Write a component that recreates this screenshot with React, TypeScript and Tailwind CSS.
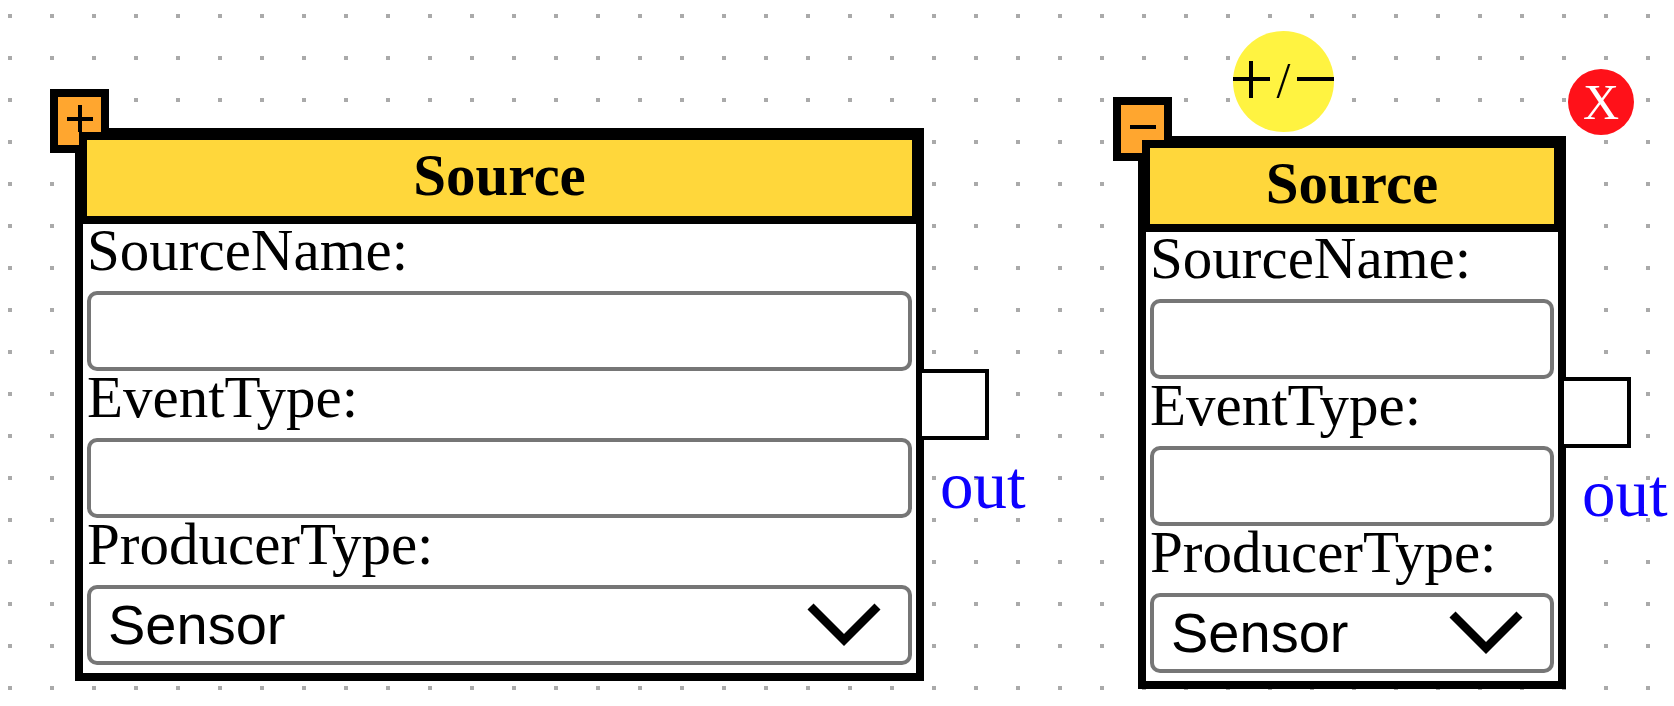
import { useId } from "react";

function PlusMinusIcon({ plus }: { plus: boolean }) {
  return (
    <svg className="h-[27px] w-[27px]" viewBox="0 0 27 27" aria-hidden="true">
      <rect x="0" y="12" width="26" height="4" />
      {plus && <rect x="11" y="0" width="4" height="27" />}
    </svg>
  );
}

function Chevron() {
  return (
    <svg
      className="pointer-events-none col-start-1 row-start-1 mt-[18px] mr-[31px] h-[43px] w-[74px] justify-self-end"
      viewBox="0 0 74 43"
      fill="none"
      stroke="black"
      strokeWidth="8.5"
      aria-hidden="true"
    >
      <path d="M3.5 3.5 37 37 70.5 3.5" />
    </svg>
  );
}

const labelClass = "text-[59px] leading-[53px]";
const controlClass =
  "h-20 w-full appearance-none rounded-[10px] border-4 border-[#767676] bg-white px-[17px] font-['Liberation_Sans',sans-serif] text-[56px] leading-[64px] text-black outline-none";

function TextField({ label }: { label: string }) {
  const id = useId();
  return (
    <div className="flex flex-col gap-[14px]">
      <label htmlFor={id} className={labelClass}>
        {label}
      </label>
      <input id={id} type="text" className={controlClass} />
    </div>
  );
}

function SelectField({ label, options }: { label: string; options: string[] }) {
  const id = useId();
  return (
    <div className="flex flex-col gap-[14px]">
      <label htmlFor={id} className={labelClass}>
        {label}
      </label>
      <div className="grid">
        <select id={id} className={`col-start-1 row-start-1 ${controlClass}`}>
          {options.map((option) => (
            <option key={option}>{option}</option>
          ))}
        </select>
        <Chevron />
      </div>
    </div>
  );
}

function NodeTools() {
  return (
    <div className="absolute -right-[68px] bottom-full left-[95px] flex items-end justify-between pb-px">
      <button
        type="button"
        aria-label="Toggle size"
        className="mb-[3px] flex h-[101px] w-[101px] items-center justify-between rounded-full bg-[#fff341] pb-1 text-[50px] leading-[56px]"
      >
        <svg className="h-[37px] w-[37px]" viewBox="0 0 37 37" aria-hidden="true">
          <rect x="0" y="16" width="37" height="4" />
          <rect x="16" y="0" width="4" height="37" />
        </svg>
        <span>/</span>
        <svg className="h-[37px] w-[37px]" viewBox="0 0 37 37" aria-hidden="true">
          <rect x="0" y="16" width="37" height="4" />
        </svg>
      </button>
      <button
        type="button"
        aria-label="Remove"
        className="h-[66px] w-[66px] rounded-full bg-[#ff1119] text-center text-[50px] leading-[66px] text-white"
      >
        X
      </button>
    </div>
  );
}

function SourceNode({ className, plus, tools }: { className: string; plus: boolean; tools?: boolean }) {
  return (
    <article className={`absolute ${className}`}>
      <div className="border-8 border-black bg-white">
        <h2 className="relative z-20 -mx-1 -mt-1 border-8 border-black bg-[#ffd73b] pt-[2px] pb-2 text-center text-[59px] leading-[66px] font-bold">
          Source
        </h2>
        <div className="flex flex-col px-1 pb-2">
          <TextField label="SourceName:" />
          <TextField label="EventType:" />
          <SelectField label="ProducerType:" options={["Sensor"]} />
        </div>
      </div>

      <button
        type="button"
        aria-label={plus ? "Expand" : "Collapse"}
        className="absolute -top-[39px] -left-[25px] z-10 flex h-16 w-[59px] items-start border-8 border-black bg-[#ffa62f] pt-2 pl-[9px]"
      >
        <PlusMinusIcon plus={plus} />
      </button>

      <div className="absolute top-[241px] left-full -ml-[6px] flex flex-col gap-2">
        <div className="h-[71px] w-[71px] border-4 border-black bg-white" />
        <span className="pl-[22px] text-[67px] leading-[74px] text-[#0d00ff]">out</span>
      </div>

      {tools && <NodeTools />}
    </article>
  );
}

export default function App() {
  return (
    <main className="relative min-h-screen overflow-hidden bg-white bg-[conic-gradient(from_270deg_at_4px_4px,#aaa_90deg,transparent_0)] bg-[length:42px_42px] bg-[position:8px_14px] font-['Liberation_Serif',serif] text-black">
      <SourceNode className="top-32 left-[75px] w-[849px]" plus />
      <SourceNode className="top-[136px] left-[1138px] w-[428px]" plus={false} tools />
    </main>
  );
}
